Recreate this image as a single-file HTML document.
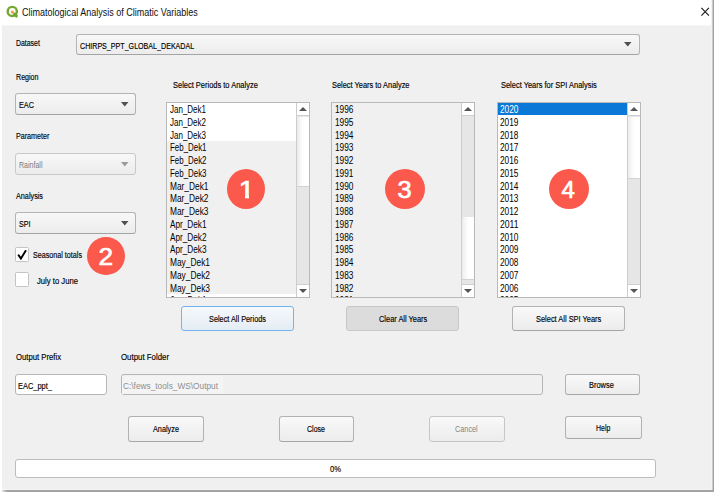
<!DOCTYPE html>
<html><head><meta charset="utf-8"><title>Climatological Analysis of Climatic Variables</title>
<style>
*{box-sizing:border-box;margin:0;padding:0}
html,body{width:714px;height:492px;overflow:hidden;background:#fff}
body{font-family:"Liberation Sans","DejaVu Sans",sans-serif;font-size:9px;color:#000;position:relative}
.a{position:absolute;white-space:nowrap}
.t{position:absolute;white-space:nowrap;transform-origin:0 50%;color:#000}
#win{left:2px;top:25px;width:709px;height:464px;background:#f0f0f0}
#shr{left:711px;top:0;width:3px;height:492px;background:linear-gradient(to right,#f3f3f3 0,#f3f3f3 1px,#cdcdcd 1px,#cdcdcd 2px,#a1a1a1 2px,#a1a1a1 3px)}
#shl{left:2px;top:489px;width:710px;height:1px;background:#f4f4f4}
#shb{left:2px;top:490px;width:712px;height:2px;background:linear-gradient(to right,#e4e4e4,#a4a4a4 5px)}
#tb{left:0;top:0;width:711px;height:25px;background:#fff}
#tb2{left:2px;top:25px;width:709px;height:1px;background:#f5f5f5}
.combo{height:22px;border:1px solid #b4b4b4;border-bottom-color:#a4a4a4;border-radius:3px;background:linear-gradient(#f8f8f8,#ececec)}
.combo.dis{border-color:#c8c8c8}
.combo svg{position:absolute;right:5.4px;top:6.7px}
.list{position:absolute;width:144px;height:196px;border:1px solid #b9b9b9;background:#fff;overflow:hidden}
.list .alt{position:absolute;left:0;width:129px;bottom:0;background:#f0f0f0}
.list .sel{position:absolute;left:0;width:129px;background:#0a78d7}
.sb{position:absolute;right:0;top:0;width:13px;height:194px;background:#e6e6e6;border-left:1px solid #cdcdcd}
.sb .up,.sb .dn{position:absolute;left:0;width:12px;height:13px;background:#fff}
.sb .up{border-bottom:1px solid #cfcfcf}.sb .dn{border-top:1px solid #cfcfcf}
.sb .up{top:0}.sb .dn{bottom:0}
.sb .up:after{content:"";position:absolute;left:2px;top:4px;border-left:4px solid transparent;border-right:4px solid transparent;border-bottom:4px solid #555}
.sb .dn:after{content:"";position:absolute;left:2px;top:4px;border-left:4px solid transparent;border-right:4px solid transparent;border-top:4px solid #555}
.sb .th{position:absolute;left:0;width:12px;background:linear-gradient(to right,#ebebeb 0%,#fafafa 35%,#fff 60%);border-bottom:1px solid #d2d2d2}
.clip{position:absolute;left:0;top:103px;width:714px;height:193.7px;overflow:hidden}
.clip .t{margin-top:-103px}
.btn{height:25px;border:1px solid #b2b2b2;border-bottom-color:#a6a6a6;border-radius:3px;background:linear-gradient(#f9f9f9,#ececec)}
.inp{height:21px;border:1px solid #b6b6b6;border-radius:3px;background:#fff}
.cb{width:13.4px;height:14.8px;border:1px solid #c4c4c4;border-radius:1.5px;background:#fff}
.bg{position:absolute;border-radius:50%;background:#fb594c}
.bd{position:absolute;white-space:nowrap;color:#fff;font-weight:normal;-webkit-text-stroke:0.7px #fff;font-size:24px;line-height:30px;width:13.35px;text-align:left;transform-origin:50% 50%}
.bc{position:absolute;background:#fb594c}
</style></head><body>
<div class="a" id="win"></div>
<div class="a" id="tb"></div>
<div class="a" id="tb2"></div>
<div class="a" id="shr"></div>
<div class="a" id="shb"></div>
<div class="a" id="shl"></div>
<svg class="a" style="left:5px;top:4px" width="16" height="16" viewBox="0 0 16 16"><circle cx="7.25" cy="7.45" r="4.6" fill="none" stroke="#74a82f" stroke-width="2.4"/><circle cx="7.4" cy="8" r="1.5" fill="#f6982f"/><path d="M8.6 9.2 L12.2 13" stroke="#6aa534" stroke-width="2.6" fill="none" stroke-linecap="butt"/></svg>
<svg class="a" style="left:700px;top:6px" width="11" height="12" viewBox="0 0 11 12"><path d="M1.4 1.8 L8.9 9.7 M8.9 1.8 L1.4 9.7" stroke="#1c1c1c" stroke-width="1.15" fill="none"/></svg>

<div class="a combo" style="left:76px;top:33.5px;width:563.6px;height:21.2px"><svg width="10" height="7" viewBox="0 0 10 7"><path d="M1 1 L8.5 1 L4.75 5.6 Z" fill="#505050"/></svg></div>
<div class="a combo" style="left:15.3px;top:93px;width:120.6px"><svg width="10" height="7" viewBox="0 0 10 7"><path d="M1 1 L8.5 1 L4.75 5.6 Z" fill="#505050"/></svg></div>
<div class="a combo dis" style="left:15.3px;top:153px;width:120.6px"><svg width="10" height="7" viewBox="0 0 10 7"><path d="M1 1 L8.5 1 L4.75 5.6 Z" fill="#9c9c9c"/></svg></div>
<div class="a combo" style="left:15.3px;top:212px;width:120.6px"><svg width="10" height="7" viewBox="0 0 10 7"><path d="M1 1 L8.5 1 L4.75 5.6 Z" fill="#505050"/></svg></div>

<div class="a cb" style="left:15.2px;top:247px"></div>
<svg class="a" style="left:17px;top:249px" width="11" height="11" viewBox="0 0 11 11"><path d="M1.2 5.6 L3.9 9.6 L9 1.2" stroke="#000" stroke-width="1.9" fill="none"/></svg>
<div class="a cb" style="left:15.2px;top:272.3px"></div>

<div class="list" style="left:166px;top:102px"><div class="alt" style="top:38.25px;height:153.00px;bottom:auto"></div><div class="sb"><div class="up"></div><div class="th" style="top:14px;height:70px"></div><div class="dn"></div></div></div>
<div class="list" style="left:331px;top:102px"><div class="alt" style="top:0.00px;"></div><div class="sb"><div class="up"></div><div class="th" style="top:114px;height:62.5px"></div><div class="dn"></div></div></div>
<div class="list" style="left:497px;top:102px"><div class="sel" style="top:0.00px;height:12.2px"></div><div class="sb"><div class="up"></div><div class="th" style="top:14px;height:62px"></div><div class="dn"></div></div></div>
<div class="clip"><div class="t" style="left:169.50px;top:104.13px;font-size:10px;line-height:12.0px;transform:scaleX(0.7994);">Jan_Dek1</div>
<div class="t" style="left:169.50px;top:116.88px;font-size:10px;line-height:12.0px;transform:scaleX(0.7994);">Jan_Dek2</div>
<div class="t" style="left:169.50px;top:129.63px;font-size:10px;line-height:12.0px;transform:scaleX(0.7994);">Jan_Dek3</div>
<div class="t" style="left:169.50px;top:142.38px;font-size:10px;line-height:12.0px;transform:scaleX(0.7911);">Feb_Dek1</div>
<div class="t" style="left:169.50px;top:155.13px;font-size:10px;line-height:12.0px;transform:scaleX(0.7911);">Feb_Dek2</div>
<div class="t" style="left:169.50px;top:167.88px;font-size:10px;line-height:12.0px;transform:scaleX(0.7911);">Feb_Dek3</div>
<div class="t" style="left:169.50px;top:180.63px;font-size:10px;line-height:12.0px;transform:scaleX(0.8344);">Mar_Dek1</div>
<div class="t" style="left:169.50px;top:193.38px;font-size:10px;line-height:12.0px;transform:scaleX(0.8344);">Mar_Dek2</div>
<div class="t" style="left:169.50px;top:206.13px;font-size:10px;line-height:12.0px;transform:scaleX(0.8344);">Mar_Dek3</div>
<div class="t" style="left:169.50px;top:218.88px;font-size:10px;line-height:12.0px;transform:scaleX(0.8208);">Apr_Dek1</div>
<div class="t" style="left:169.50px;top:231.63px;font-size:10px;line-height:12.0px;transform:scaleX(0.8208);">Apr_Dek2</div>
<div class="t" style="left:169.50px;top:244.38px;font-size:10px;line-height:12.0px;transform:scaleX(0.8208);">Apr_Dek3</div>
<div class="t" style="left:169.50px;top:257.14px;font-size:10px;line-height:12.0px;transform:scaleX(0.8366);">May_Dek1</div>
<div class="t" style="left:169.50px;top:269.89px;font-size:10px;line-height:12.0px;transform:scaleX(0.8366);">May_Dek2</div>
<div class="t" style="left:169.50px;top:282.64px;font-size:10px;line-height:12.0px;transform:scaleX(0.8366);">May_Dek3</div>
<div class="t" style="left:169.50px;top:295.39px;font-size:10px;line-height:12.0px;transform:scaleX(0.8105);">Jun_Dek1</div>
<div class="t" style="left:334.80px;top:104.13px;font-size:10px;line-height:12.0px;transform:scaleX(0.8315);">1996</div>
<div class="t" style="left:334.80px;top:116.88px;font-size:10px;line-height:12.0px;transform:scaleX(0.8315);">1995</div>
<div class="t" style="left:334.80px;top:129.63px;font-size:10px;line-height:12.0px;transform:scaleX(0.8315);">1994</div>
<div class="t" style="left:334.80px;top:142.38px;font-size:10px;line-height:12.0px;transform:scaleX(0.8315);">1993</div>
<div class="t" style="left:334.80px;top:155.13px;font-size:10px;line-height:12.0px;transform:scaleX(0.8315);">1992</div>
<div class="t" style="left:334.80px;top:167.88px;font-size:10px;line-height:12.0px;transform:scaleX(0.8315);">1991</div>
<div class="t" style="left:334.80px;top:180.63px;font-size:10px;line-height:12.0px;transform:scaleX(0.8315);">1990</div>
<div class="t" style="left:334.80px;top:193.38px;font-size:10px;line-height:12.0px;transform:scaleX(0.8315);">1989</div>
<div class="t" style="left:334.80px;top:206.13px;font-size:10px;line-height:12.0px;transform:scaleX(0.8315);">1988</div>
<div class="t" style="left:334.80px;top:218.88px;font-size:10px;line-height:12.0px;transform:scaleX(0.8315);">1987</div>
<div class="t" style="left:334.80px;top:231.63px;font-size:10px;line-height:12.0px;transform:scaleX(0.8315);">1986</div>
<div class="t" style="left:334.80px;top:244.38px;font-size:10px;line-height:12.0px;transform:scaleX(0.8315);">1985</div>
<div class="t" style="left:334.80px;top:257.14px;font-size:10px;line-height:12.0px;transform:scaleX(0.8315);">1984</div>
<div class="t" style="left:334.80px;top:269.89px;font-size:10px;line-height:12.0px;transform:scaleX(0.8315);">1983</div>
<div class="t" style="left:334.80px;top:282.64px;font-size:10px;line-height:12.0px;transform:scaleX(0.8315);">1982</div>
<div class="t" style="left:334.80px;top:295.39px;font-size:10px;line-height:12.0px;transform:scaleX(0.8315);">1981</div>
<div class="t" style="left:500.30px;top:104.13px;font-size:10px;line-height:12.0px;transform:scaleX(0.8315);color:#fff;">2020</div>
<div class="t" style="left:500.30px;top:116.88px;font-size:10px;line-height:12.0px;transform:scaleX(0.8315);">2019</div>
<div class="t" style="left:500.30px;top:129.63px;font-size:10px;line-height:12.0px;transform:scaleX(0.8315);">2018</div>
<div class="t" style="left:500.30px;top:142.38px;font-size:10px;line-height:12.0px;transform:scaleX(0.8315);">2017</div>
<div class="t" style="left:500.30px;top:155.13px;font-size:10px;line-height:12.0px;transform:scaleX(0.8315);">2016</div>
<div class="t" style="left:500.30px;top:167.88px;font-size:10px;line-height:12.0px;transform:scaleX(0.8315);">2015</div>
<div class="t" style="left:500.30px;top:180.63px;font-size:10px;line-height:12.0px;transform:scaleX(0.8315);">2014</div>
<div class="t" style="left:500.30px;top:193.38px;font-size:10px;line-height:12.0px;transform:scaleX(0.8315);">2013</div>
<div class="t" style="left:500.30px;top:206.13px;font-size:10px;line-height:12.0px;transform:scaleX(0.8315);">2012</div>
<div class="t" style="left:500.30px;top:218.88px;font-size:10px;line-height:12.0px;transform:scaleX(0.8598);">2011</div>
<div class="t" style="left:500.30px;top:231.63px;font-size:10px;line-height:12.0px;transform:scaleX(0.8315);">2010</div>
<div class="t" style="left:500.30px;top:244.38px;font-size:10px;line-height:12.0px;transform:scaleX(0.8315);">2009</div>
<div class="t" style="left:500.30px;top:257.14px;font-size:10px;line-height:12.0px;transform:scaleX(0.8315);">2008</div>
<div class="t" style="left:500.30px;top:269.89px;font-size:10px;line-height:12.0px;transform:scaleX(0.8315);">2007</div>
<div class="t" style="left:500.30px;top:282.64px;font-size:10px;line-height:12.0px;transform:scaleX(0.8315);">2006</div>
<div class="t" style="left:500.30px;top:295.39px;font-size:10px;line-height:12.0px;transform:scaleX(0.8315);">2005</div></div>

<div class="a btn" style="left:181px;top:306px;width:113px;border-color:#74b4ee;background:linear-gradient(#f6f9fc,#e4ecf4)"></div>
<div class="a btn" style="left:346px;top:306px;width:113px;background:#dcdcdc;border-color:#c8c8c8"></div>
<div class="a btn" style="left:512px;top:306px;width:113px"></div>

<div class="a inp" style="left:15px;top:374px;width:92px"></div>
<div class="a inp" style="left:121px;top:374px;width:422px;background:#f0f0f0"></div><div class="a" style="left:122px;top:375.5px;width:100.5px;height:18px;background:#f4f4f4"></div>
<div class="a btn" style="left:564.5px;top:374px;width:75.5px;height:21px"></div>

<div class="a btn" style="left:128px;top:416px;width:76px;height:26px"></div>
<div class="a btn" style="left:279px;top:416px;width:75px;height:26px"></div>
<div class="a btn" style="left:429px;top:416px;width:76px;height:26px;border-color:#c6c6c6"></div>
<div class="a btn" style="left:565px;top:416px;width:77px;height:23px"></div>

<div class="a inp" style="left:15px;top:459px;width:641px;height:19px;border-color:#bcbcbc;border-radius:3px"></div>

<div class="t" style="left:22.20px;top:5.87px;font-size:10.7px;line-height:12.84px;transform:scaleX(0.8440);color:#111;">Climatological Analysis of Climatic Variables</div>
<div class="t" style="left:15.60px;top:38.94px;font-size:8.3px;line-height:9.96px;transform:scaleX(0.8323);-webkit-text-stroke:0.15px #000;">Dataset</div>
<div class="t" style="left:79.50px;top:40.76px;font-size:8.6px;line-height:10.32px;transform:scaleX(0.8273);-webkit-text-stroke:0.15px #000;">CHIRPS_PPT_GLOBAL_DEKADAL</div>
<div class="t" style="left:15.50px;top:72.74px;font-size:8.3px;line-height:9.96px;transform:scaleX(0.8556);-webkit-text-stroke:0.15px #000;">Region</div>
<div class="t" style="left:19.20px;top:100.16px;font-size:8.6px;line-height:10.32px;transform:scaleX(0.8488);-webkit-text-stroke:0.15px #000;">EAC</div>
<div class="t" style="left:15.50px;top:132.04px;font-size:8.3px;line-height:9.96px;transform:scaleX(0.8597);-webkit-text-stroke:0.15px #000;">Parameter</div>
<div class="t" style="left:19.20px;top:159.56px;font-size:8.6px;line-height:10.32px;transform:scaleX(0.8196);color:#7c7c7c;">Rainfall</div>
<div class="t" style="left:15.50px;top:192.14px;font-size:8.3px;line-height:9.96px;transform:scaleX(0.8736);-webkit-text-stroke:0.15px #000;">Analysis</div>
<div class="t" style="left:19.20px;top:218.76px;font-size:8.6px;line-height:10.32px;transform:scaleX(0.8298);-webkit-text-stroke:0.15px #000;">SPI</div>
<div class="t" style="left:33.00px;top:251.14px;font-size:8.3px;line-height:9.96px;transform:scaleX(0.8637);-webkit-text-stroke:0.15px #000;">Seasonal totals</div>
<div class="t" style="left:37.00px;top:277.14px;font-size:8.3px;line-height:9.96px;transform:scaleX(0.9259);-webkit-text-stroke:0.15px #000;">July to June</div>
<div class="t" style="left:173.00px;top:81.14px;font-size:8.3px;line-height:9.96px;transform:scaleX(0.9012);-webkit-text-stroke:0.15px #000;">Select Periods to Analyze</div>
<div class="t" style="left:331.60px;top:81.14px;font-size:8.3px;line-height:9.96px;transform:scaleX(0.8937);-webkit-text-stroke:0.15px #000;">Select Years to Analyze</div>
<div class="t" style="left:500.60px;top:81.14px;font-size:8.3px;line-height:9.96px;transform:scaleX(0.8991);-webkit-text-stroke:0.15px #000;">Select Years for SPI Analysis</div>
<div class="t" style="left:209.00px;top:314.64px;font-size:8.3px;line-height:9.96px;transform:scaleX(0.8827);-webkit-text-stroke:0.15px #000;">Select All Periods</div>
<div class="t" style="left:378.50px;top:314.64px;font-size:8.3px;line-height:9.96px;transform:scaleX(0.8950);-webkit-text-stroke:0.15px #000;">Clear All Years</div>
<div class="t" style="left:536.00px;top:314.64px;font-size:8.3px;line-height:9.96px;transform:scaleX(0.8961);-webkit-text-stroke:0.15px #000;">Select All SPI Years</div>
<div class="t" style="left:15.50px;top:353.14px;font-size:8.3px;line-height:9.96px;transform:scaleX(0.9293);-webkit-text-stroke:0.15px #000;">Output Prefix</div>
<div class="t" style="left:121.00px;top:353.14px;font-size:8.3px;line-height:9.96px;transform:scaleX(0.9461);-webkit-text-stroke:0.15px #000;">Output Folder</div>
<div class="t" style="left:18.00px;top:380.56px;font-size:8.6px;line-height:10.32px;transform:scaleX(0.8676);-webkit-text-stroke:0.15px #000;">EAC_ppt_</div>
<div class="t" style="left:123.00px;top:380.56px;font-size:8.6px;line-height:10.32px;transform:scaleX(0.9654);color:#8e8e8e;">C:\fews_tools_WS\Output</div>
<div class="t" style="left:589.00px;top:380.64px;font-size:8.3px;line-height:9.96px;transform:scaleX(0.8962);-webkit-text-stroke:0.15px #000;">Browse</div>
<div class="t" style="left:153.00px;top:424.74px;font-size:8.3px;line-height:9.96px;transform:scaleX(0.8804);-webkit-text-stroke:0.15px #000;">Analyze</div>
<div class="t" style="left:307.30px;top:424.74px;font-size:8.3px;line-height:9.96px;transform:scaleX(0.8483);-webkit-text-stroke:0.15px #000;">Close</div>
<div class="t" style="left:455.20px;top:424.74px;font-size:8.3px;line-height:9.96px;transform:scaleX(0.8789);color:#858585;">Cancel</div>
<div class="t" style="left:596.30px;top:423.64px;font-size:8.3px;line-height:9.96px;transform:scaleX(0.8373);-webkit-text-stroke:0.15px #000;">Help</div>
<div class="t" style="left:330.00px;top:464.64px;font-size:8.3px;line-height:9.96px;transform:scaleX(0.9167);-webkit-text-stroke:0.15px #000;">0%</div>

<div class="bg" style="left:226.9px;top:168.8px;width:38.3px;height:40.1px"></div><div class="bd" style="left:239.67px;top:174.83px;transform:scaleX(1.176)">1</div><div class="bc" style="left:236.43px;top:193.31px;width:8.75px;height:6.09px"></div><div class="bc" style="left:248.50px;top:193.31px;width:7.22px;height:6.09px"></div>
<div class="bg" style="left:87.0px;top:236.7px;width:38.2px;height:38.3px"></div><div class="bd" style="left:99.18px;top:242.13px;transform:scaleX(1.092)">2</div>
<div class="bg" style="left:385.0px;top:168.8px;width:40.0px;height:40.2px"></div><div class="bd" style="left:397.60px;top:174.93px;transform:scaleX(1.060)">3</div>
<div class="bg" style="left:548.8px;top:168.8px;width:40.2px;height:40.2px"></div><div class="bd" style="left:561.40px;top:174.83px;transform:scaleX(1.000)">4</div>
</body></html>
